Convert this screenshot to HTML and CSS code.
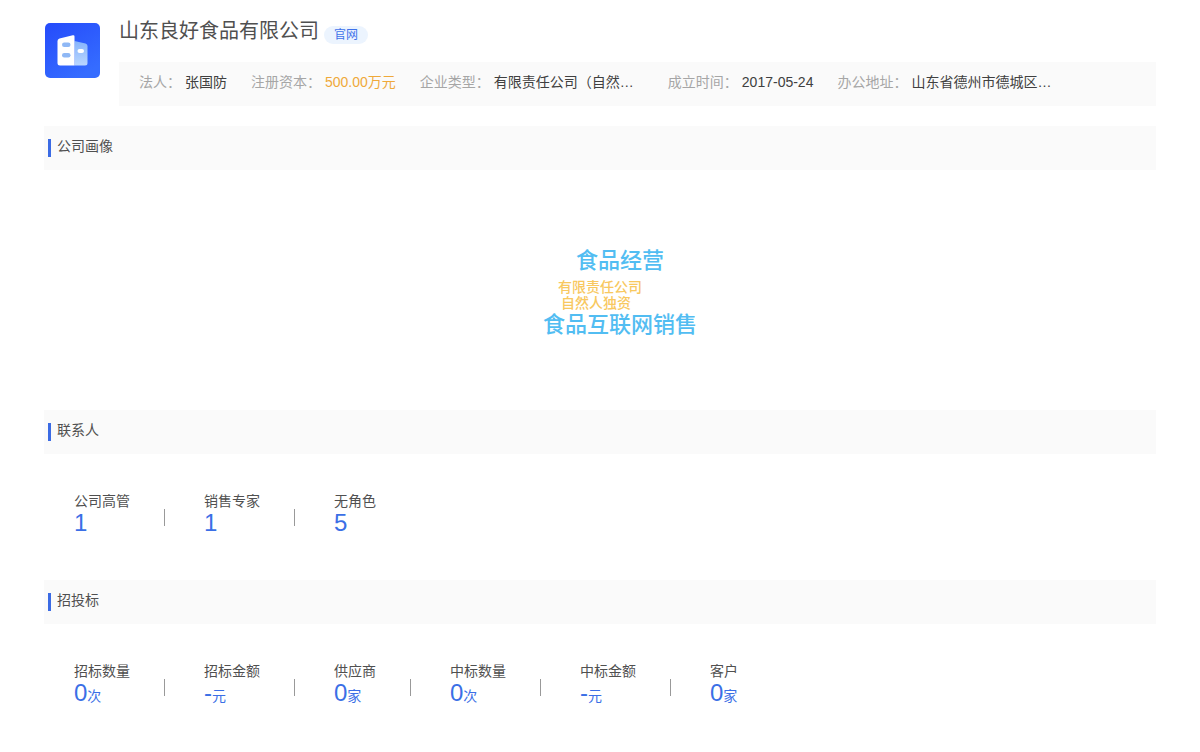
FILE: index.html
```html
<!DOCTYPE html>
<html lang="zh-CN">
<head>
<meta charset="utf-8">
<title>山东良好食品有限公司</title>
<link rel="stylesheet" href="styles.css">
</head>
<body>
<main class="page">
  <header class="company">
    <svg class="logo" viewBox="0 0 55 55" aria-hidden="true">
      <defs>
        <linearGradient id="tile" x1="0" y1="0" x2="0.6" y2="1">
          <stop offset="0" stop-color="#254bfb"/>
          <stop offset="1" stop-color="#356cff"/>
        </linearGradient>
        <linearGradient id="wing" x1="0" y1="0" x2="0" y2="1">
          <stop offset="0" stop-color="#86b4fb"/>
          <stop offset="1" stop-color="#b9d6ff"/>
        </linearGradient>
      </defs>
      <rect width="55" height="55" rx="5" fill="url(#tile)"/>
      <path d="M29.500 18L40.500 20.500Q42.500 21 42.500 23V40Q42.500 42.500 40 42.500H29.500Z" fill="url(#wing)"/>
      <path d="M14.500 15.500Q12.500 16 12.500 18V40Q12.500 42.500 15 42.500H29.500V13.500Q29.500 11.800 27.800 12.300Z" fill="#fff"/>
      <rect x="17" y="19.500" width="8.500" height="4.500" rx="2.200" fill="#8fb8f5"/>
      <rect x="17" y="30" width="8.500" height="4.500" rx="2.200" fill="#8fb8f5"/>
      <rect x="32.500" y="26" width="6.500" height="4" rx="2" fill="#fff"/>
    </svg>
    <div class="company-body">
      <div class="title-row">
        <h1 class="company-name">山东良好食品有限公司</h1>
        <a class="site-link" href="#">官网</a>
      </div>
      <dl class="facts">
        <div class="fact"><dt>法人：</dt><dd>张国防</dd></div>
        <div class="fact"><dt>注册资本：</dt><dd class="money">500.00万元</dd></div>
        <div class="fact"><dt>企业类型：</dt><dd class="wide">有限责任公司（自然…</dd></div>
        <div class="fact"><dt>成立时间：</dt><dd>2017-05-24</dd></div>
        <div class="fact"><dt>办公地址：</dt><dd class="wide">山东省德州市德城区…</dd></div>
      </dl>
    </div>
  </header>

  <section>
    <h2 class="section-title">公司画像</h2>
    <div class="cloud">
      <span class="word big word-food">食品经营</span>
      <span class="word small word-limited">有限责任公司</span>
      <span class="word small word-owner">自然人独资</span>
      <span class="word big word-online">食品互联网销售</span>
    </div>
  </section>

  <section>
    <h2 class="section-title">联系人</h2>
    <ul class="stats">
      <li class="stat"><span class="label">公司高管</span><span class="value">1</span></li>
      <li class="stat"><span class="label">销售专家</span><span class="value">1</span></li>
      <li class="stat"><span class="label">无角色</span><span class="value">5</span></li>
    </ul>
  </section>

  <section>
    <h2 class="section-title">招投标</h2>
    <ul class="stats">
      <li class="stat"><span class="label">招标数量</span><span class="value">0<small>次</small></span></li>
      <li class="stat"><span class="label">招标金额</span><span class="value">-<small>元</small></span></li>
      <li class="stat"><span class="label">供应商</span><span class="value">0<small>家</small></span></li>
      <li class="stat"><span class="label">中标数量</span><span class="value">0<small>次</small></span></li>
      <li class="stat"><span class="label">中标金额</span><span class="value">-<small>元</small></span></li>
      <li class="stat"><span class="label">客户</span><span class="value">0<small>家</small></span></li>
    </ul>
  </section>
</main>
</body>
</html>
```
FILE: styles.css
```css
* {
  box-sizing: border-box;
}

body {
  margin: 0;
  background: #fff;
  color: #505050;
  font: 14px/20px "Liberation Sans", "Noto Sans CJK SC", sans-serif;
}

h1, h2, dl, dd, ul {
  margin: 0;
  padding: 0;
}

.page {
  padding: 18px 44px;
}

.company {
  display: flex;
  gap: 19px;
  margin-bottom: 20px;
  padding-left: 1px;
}

.logo {
  flex: none;
  width: 55px;
  height: 55px;
  margin-top: 5px;
}

.company-body {
  flex: 1;
  min-width: 0;
}

.title-row {
  display: flex;
  align-items: flex-end;
  gap: 5px;
  margin-bottom: 18px;
}

.company-name {
  font-size: 20px;
  font-weight: 400;
  line-height: 26px;
}

.site-link {
  padding: 0 10px;
  border-radius: 9px;
  background: #ecf4fe;
  color: #3f72ea;
  font-size: 12px;
  line-height: 18px;
  text-decoration: none;
}

.facts {
  display: flex;
  gap: 24px;
  padding: 10px 20px 14px;
  background: #fafafa;
}

.fact {
  display: flex;
  gap: 4px;
  white-space: nowrap;
}

.fact dt {
  color: #a6a6a6;
}

.fact dd {
  color: #404040;
}

.fact .money {
  color: #efa93a;
}

.fact .wide {
  min-width: 150px;
}

.section-title {
  display: flex;
  gap: 6px;
  padding: 10px 4px 13px;
  background: #fafafa;
  font-size: 14px;
  font-weight: 400;
  line-height: 21px;
}

.section-title::before {
  content: "";
  width: 3px;
  height: 18px;
  margin-top: 3px;
  background: #3b6be4;
}

.cloud {
  position: relative;
  height: 240px;
}

.word {
  position: absolute;
  white-space: nowrap;
  font-weight: 500;
}

.big {
  color: #52bdf2;
  font-size: 22px;
  line-height: 30px;
}

.small {
  color: #f8c860;
  font-size: 14px;
  line-height: 20px;
}

.word-food {
  top: 76px;
  left: calc(50% - 24px);
}

.word-limited {
  top: 107px;
  left: calc(50% - 42px);
}

.word-owner {
  top: 123px;
  left: calc(50% - 39px);
}

.word-online {
  top: 140px;
  left: calc(50% - 57px);
}

.stats {
  display: flex;
  padding: 36px 30px 46px;
  list-style: none;
}

.stat {
  display: flex;
  flex-direction: column;
  position: relative;
  margin-right: 74px;
}

.stat:not(:last-child)::after {
  content: "";
  position: absolute;
  top: 19px;
  right: -35px;
  width: 1px;
  height: 17px;
  background: #999;
}

.label {
  line-height: 22px;
}

.value {
  color: #3b6fe6;
  font-size: 24px;
  line-height: 22px;
}

.value small {
  font-size: 14px;
}
```
